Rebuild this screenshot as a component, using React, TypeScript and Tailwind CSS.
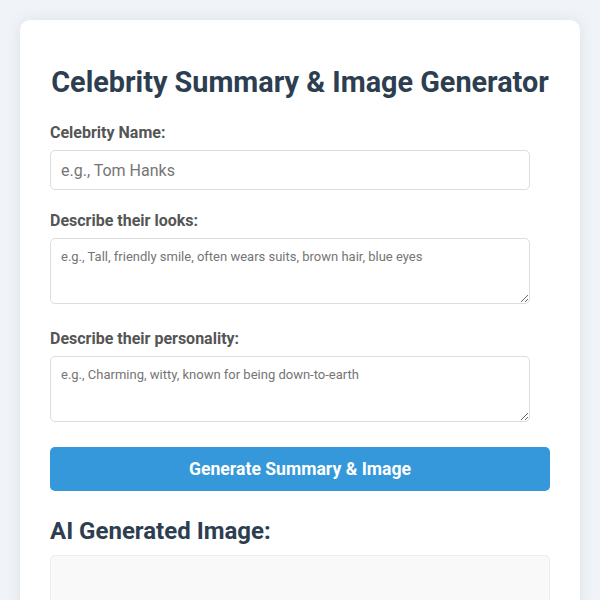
import React from "react";

const Field = ({ label, children, first }: { label: string; children: React.ReactNode; first?: boolean }) => (
  <div className={first ? "" : "mt-[21px]"}>
    <label className="block mb-[8px] text-[16px] leading-[normal] font-bold text-[#555]">{label}</label>
    {children}
  </div>
);

const App = () => {
  return (
    <div className="min-h-[600px] bg-[#f0f4f8] p-[20px] font-['Roboto',sans-serif]">
      <div className="bg-white rounded-[10px] shadow-[0_0_15px_rgba(0,0,0,0.08)] px-[30px] pt-[45px] pb-[40px]">
        <h1 className="text-center whitespace-nowrap text-[28.8px] leading-[normal] font-bold text-[#2c3e50] mb-[24px]">
          Celebrity Summary &amp; Image Generator
        </h1>

        <Field label="Celebrity Name:" first>
          <input
            type="text"
            placeholder="e.g., Tom Hanks"
            className="block w-[480px] h-[40px] px-[10px] text-[16px] border border-[#ddd] rounded-[5px] placeholder:text-[#757575] outline-none"
          />
        </Field>

        <Field label="Describe their looks:">
          <textarea
            placeholder="e.g., Tall, friendly smile, often wears suits, brown hair, blue eyes"
            className="block w-[480px] h-[66px] p-[10px] text-[13px] leading-[normal] border border-[#ddd] rounded-[5px] placeholder:text-[#757575] outline-none"
          />
        </Field>

        <div className="mt-[25px]">
          <label className="block mb-[8px] text-[16px] leading-[normal] font-bold text-[#555]">
            Describe their personality:
          </label>
          <textarea
            placeholder="e.g., Charming, witty, known for being down-to-earth"
            className="block w-[480px] h-[66px] p-[10px] text-[13px] leading-[normal] border border-[#ddd] rounded-[5px] placeholder:text-[#757575] outline-none"
          />
        </div>

        <button className="mt-[25px] block w-full h-[44px] bg-[#3498db] text-white text-[17.6px] font-bold rounded-[5px]">
          Generate Summary &amp; Image
        </button>

        <h2 className="mt-[26px] text-[24px] leading-[normal] font-bold text-[#2c3e50]">AI Generated Image:</h2>
        <div className="mt-[10px] h-[200px] bg-[#f9f9f9] border border-[#eee] rounded-[5px]" />
      </div>
    </div>
  );
};

export default App;
